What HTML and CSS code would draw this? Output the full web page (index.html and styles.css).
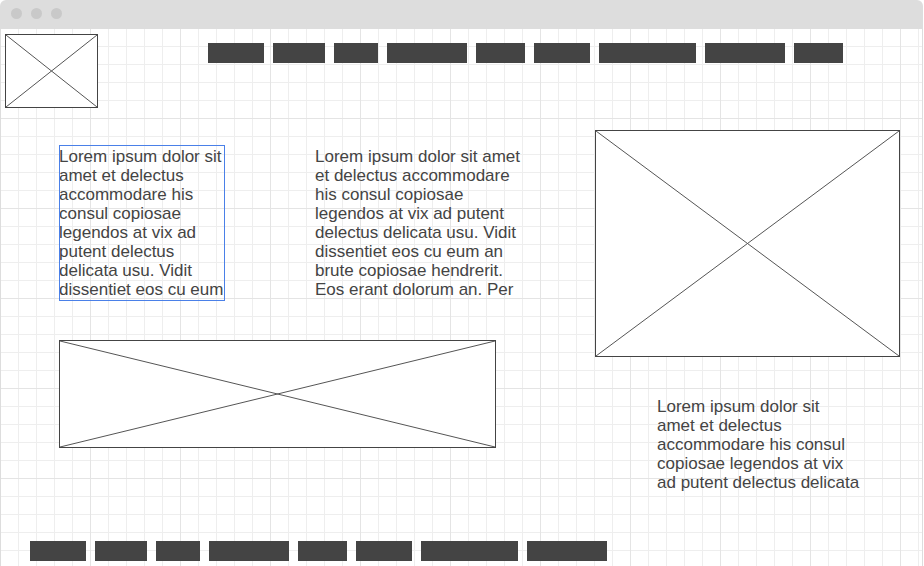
FILE: index.html
```html
<!DOCTYPE html>
<html lang="en">
<head>
<meta charset="utf-8">
<meta name="viewport" content="width=device-width, initial-scale=1">
<title>Wireframe</title>
<link rel="stylesheet" href="styles.css">
</head>
<body>
<div class="window">
  <div class="titlebar">
    <span class="dot"></span>
    <span class="dot"></span>
    <span class="dot"></span>
  </div>
  <div class="canvas">
    <header class="top">
      <svg class="placeholder logo" aria-hidden="true"><line x1="0" y1="0" x2="100%" y2="100%"/><line x1="0" y1="100%" x2="100%" y2="0"/></svg>
      <nav class="bars">
        <a class="bar m" href="#"></a>
        <a class="bar s" href="#"></a>
        <a class="bar xs" href="#"></a>
        <a class="bar l" href="#"></a>
        <a class="bar sm" href="#"></a>
        <a class="bar m" href="#"></a>
        <a class="bar xl" href="#"></a>
        <a class="bar l" href="#"></a>
        <a class="bar sm" href="#"></a>
      </nav>
    </header>
    <main class="main">
      <section class="left">
        <div class="texts">
          <p class="copy selected">Lorem ipsum dolor sit<br>amet et delectus<br>accommodare his<br>consul copiosae<br>legendos at vix ad<br>putent delectus<br>delicata usu. Vidit<br>dissentiet eos cu eum</p>
          <p class="copy">Lorem ipsum dolor sit amet<br>et delectus accommodare<br>his consul copiosae<br>legendos at vix ad putent<br>delectus delicata usu. Vidit<br>dissentiet eos cu eum an<br>brute copiosae hendrerit.<br>Eos erant dolorum an. Per</p>
        </div>
        <svg class="placeholder banner" aria-hidden="true"><line x1="0" y1="0" x2="100%" y2="100%"/><line x1="0" y1="100%" x2="100%" y2="0"/></svg>
      </section>
      <section class="right">
        <svg class="placeholder photo" aria-hidden="true"><line x1="0" y1="0" x2="100%" y2="100%"/><line x1="0" y1="100%" x2="100%" y2="0"/></svg>
        <p class="copy caption">Lorem ipsum dolor sit<br>amet et delectus<br>accommodare his consul<br>copiosae legendos at vix<br>ad putent delectus delicata</p>
      </section>
    </main>
    <footer class="bars foot">
      <a class="bar m" href="#"></a>
      <a class="bar s" href="#"></a>
      <a class="bar xs" href="#"></a>
      <a class="bar l" href="#"></a>
      <a class="bar sm" href="#"></a>
      <a class="bar m" href="#"></a>
      <a class="bar xl" href="#"></a>
      <a class="bar l" href="#"></a>
    </footer>
  </div>
</div>
</body>
</html>
```
FILE: styles.css
```css
* {
  box-sizing: border-box;
}

body {
  margin: 0 1px 0 0;
  background: #fff;
  color: #444;
  font-family: "Liberation Sans", Arial, sans-serif;
  font-size: 17px;
  line-height: 19px;
}

.window {
  display: flex;
  flex-direction: column;
  min-height: 100vh;
}

.titlebar {
  display: flex;
  gap: 9px;
  height: 29px;
  padding: 8px 11px;
  background: #ddd;
  border-radius: 6px 6px 0 0;
}

.dot {
  width: 11px;
  height: 11px;
  border-radius: 50%;
  background: #c9c9c9;
}

/* 18px minor grid with a stronger line every 90px */
.canvas {
  flex: 1;
  padding: 5px 22px 5px 4px;
  border: solid #ddd;
  border-width: 0 1px;
  background-color: #fff;
  background-image:
    linear-gradient(to right, #e4e4e4 1px, transparent 1px),
    linear-gradient(to bottom, #e4e4e4 1px, transparent 1px),
    linear-gradient(to right, #eee 1px, transparent 1px),
    linear-gradient(to bottom, #eee 1px, transparent 1px);
  background-size: 90px 90px, 90px 90px, 18px 18px, 18px 18px;
  background-position: 0 -1px;
  background-origin: border-box;
}

.top {
  display: flex;
  gap: 110px;
}

.placeholder {
  display: block;
  flex: none;
  background: #fff;
  border: 1px solid #444;
}

.placeholder line {
  stroke: #555;
  stroke-width: 1px;
}

.logo {
  width: 93px;
  height: 74px;
}

.bars {
  display: flex;
  gap: 9px;
}

.top .bars {
  margin-top: 9px;
}

.bar {
  height: 20px;
  background: #444;
}

.xs { width: 44px; }
.sm { width: 49px; }
.s { width: 52px; }
.m { width: 56px; }
.l { width: 80px; }
.xl { width: 97px; }

.main {
  display: grid;
  grid-template-columns: 476fr 305fr;
  gap: 60px;
  margin: 22px 0 0 54px;
}

.left {
  padding-top: 15px;
}

.texts {
  display: flex;
  gap: 90px;
}

.copy {
  margin: 0;
  padding: 2px 0;
  white-space: nowrap;
}

.selected {
  width: 166px;
  outline: 1px solid #4a80e8;
  outline-offset: -1px;
}

.banner {
  width: calc(100% - 39px);
  height: 108px;
  margin-top: 39px;
}

.photo {
  width: 100%;
  height: 227px;
}

.caption {
  margin: 38px 0 0 62px;
}

.foot {
  margin: 47px 0 0 25px;
}
```
